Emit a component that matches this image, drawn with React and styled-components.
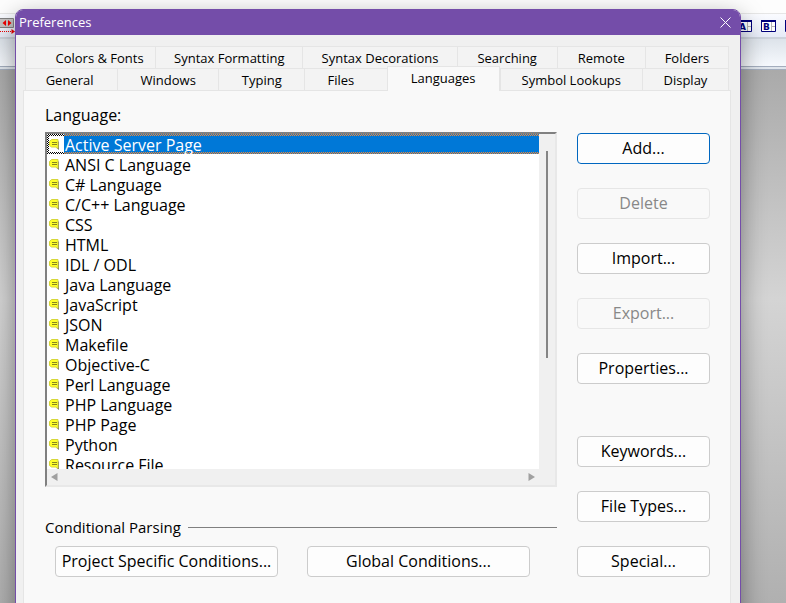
import React from "react";
import { useState } from "react";
import styled, { createGlobalStyle } from "styled-components";

const topTabs = [
  { name: "Colors & Fonts", size: 130, left: 18 },
  { name: "Syntax Formatting", size: 147 },
  { name: "Syntax Decorations", size: 154 },
  { name: "Searching", size: 100 },
  { name: "Remote", size: 88 },
  { name: "Folders", size: 84 }
];

const bottomTabs = [
  { name: "General", size: 92, right: 4 },
  { name: "Windows", size: 101 },
  { name: "Typing", size: 86 },
  { name: "Files", size: 82, right: 10 },
  { name: "Languages", size: 113 },
  { name: "Symbol Lookups", size: 142 },
  { name: "Display", size: 87 }
];

const languages = [
  "Active Server Page",
  "ANSI C Language",
  "C# Language",
  "C/C++ Language",
  "CSS",
  "HTML",
  "IDL / ODL",
  "Java Language",
  "JavaScript",
  "JSON",
  "Makefile",
  "Objective-C",
  "Perl Language",
  "PHP Language",
  "PHP Page",
  "Python",
  "Resource File"
];

const NoteIcon = () => (
  <svg width="11" height="11" viewBox="0 0 11 11" aria-hidden="true">
    <path d="M9 2.500h1V11L7.500 9H9z" fill="#6e6e6e" />
    <path d="M2.500 .5H9v9L7 8H2.500L.5 6.500v-4z" fill="#ffff28" stroke="#d6d63c" />
    <path d="M3 3.500h5M3 5.500h5" stroke="#85851e" fill="none" />
  </svg>
);

const CloseIcon = () => (
  <svg width="11" height="11" viewBox="0 0 11 11" aria-hidden="true">
    <path d="M.5 .5l10 10M10.500 .5l-10 10" stroke="#fff" fill="none" />
  </svg>
);

const WidthIcon = () => (
  <svg width="15" height="18" viewBox="0 0 15 18" aria-hidden="true">
    <path d="M0 .5h13.500v9H0" fill="#c6c3c3" stroke="#828282" />
    <path d="M6 2v6L2.500 5zM8 2v6l3.500-3z" fill="#f00000" />
    <path d="M0 13.500h12" stroke="#f00000" strokeDasharray="1 1" />
    <path d="M11.500 11l3.500 2.500-3.500 2.500z" fill="#f00000" />
  </svg>
);

const BookmarkIcon = ({ letter }) => (
  <svg width="15" height="12" viewBox="0 0 15 12" aria-hidden="true">
    <path d="M.5 1h14v10.500H.5z" fill="#fff" stroke="#00007b" />
    <path d="M0 1h15" stroke="#00007b" strokeWidth="2" />
    <path d="M10.500 2v9M11 6.500h3" stroke="#b4b4b4" />
    <text x="2" y="10" fontSize="9" fontWeight="700" fontFamily="DejaVu Sans, sans-serif" fill="#00007b">
      {letter}
    </text>
  </svg>
);

function TabRow({ tabs, current, onSelect }) {
  return (
    <TabList role="tablist" $columns={tabs.map((tab) => `${tab.size}fr`).join(" ")}>
      {tabs.map((tab) => (
        <Tab
          key={tab.name}
          role="tab"
          aria-selected={current === tab.name}
          $left={tab.left}
          $right={tab.right}
          onClick={() => onSelect(tab.name)}
        >
          {tab.name}
        </Tab>
      ))}
    </TabList>
  );
}

function App() {
  const [tab, setTab] = useState("Languages");
  const [language, setLanguage] = useState("Active Server Page");

  return (
    <Desktop>
      <GlobalStyle />
      <MenuStrip />
      <ToolStrip>
        <WidthIcon />
        <ToolGroup>
          <BookmarkIcon letter="A" />
          <BookmarkIcon letter="B" />
          <BookmarkIcon />
        </ToolGroup>
      </ToolStrip>
      <SubStrip />
      <Workspace />

      <Dialog role="dialog" aria-labelledby="dialog-title">
        <TitleBar>
          <Title id="dialog-title">Preferences</Title>
          <CloseButton aria-label="Close">
            <CloseIcon />
          </CloseButton>
        </TitleBar>
        <DialogBody>
          <Tabs>
            <TabRow tabs={topTabs} current={tab} onSelect={setTab} />
            <TabRow tabs={bottomTabs} current={tab} onSelect={setTab} />
          </Tabs>
          <Panel role="tabpanel">
            <ListLabel id="language-label">Language:</ListLabel>
            <Columns>
              <div>
                <ListBox>
                  <List role="listbox" aria-labelledby="language-label" tabIndex={0}>
                    {languages.map((name) => (
                      <Item
                        key={name}
                        role="option"
                        aria-selected={language === name}
                        onClick={() => setLanguage(name)}
                      >
                        <IconCell>
                          <NoteIcon />
                        </IconCell>
                        <ItemName>{name}</ItemName>
                      </Item>
                    ))}
                  </List>
                  <VerticalBar>
                    <Thumb />
                  </VerticalBar>
                  <HorizontalBar>
                    <svg width="7" height="8" viewBox="0 0 7 8" aria-hidden="true">
                      <path d="M6.500 0v8L0 4z" fill="#a0a0a0" />
                    </svg>
                    <svg width="7" height="8" viewBox="0 0 7 8" aria-hidden="true">
                      <path d="M.5 0v8L7 4z" fill="#a0a0a0" />
                    </svg>
                  </HorizontalBar>
                </ListBox>
                <GroupTitle>
                  <span id="parsing-label">Conditional Parsing</span>
                  <Rule />
                </GroupTitle>
                <GroupButtons role="group" aria-labelledby="parsing-label">
                  <Button>Project Specific Conditions...</Button>
                  <Button>Global Conditions...</Button>
                </GroupButtons>
              </div>
              <Actions>
                <ActionGroup>
                  <Button $primary>Add...</Button>
                  <Button disabled>Delete</Button>
                  <Button>Import...</Button>
                  <Button disabled>Export...</Button>
                  <Button>Properties...</Button>
                </ActionGroup>
                <ActionGroup>
                  <Button>Keywords...</Button>
                  <Button>File Types...</Button>
                  <Button>Special...</Button>
                </ActionGroup>
              </Actions>
            </Columns>
          </Panel>
        </DialogBody>
      </Dialog>
    </Desktop>
  );
}
export default App;

const GlobalStyle = createGlobalStyle`
  * {
    box-sizing: border-box;
  }

  body {
    margin: 0;
    font-family: "Open Sans", "Noto Sans", sans-serif;
    font-size: 15px;
    color: #000;
  }

  button {
    font-family: inherit;
    color: inherit;
    white-space: nowrap;
  }
`;

const Desktop = styled.div`
  position: relative;
  display: flex;
  flex-direction: column;
  height: 100vh;
  overflow: hidden;
`;

const MenuStrip = styled.div`
  height: 13px;
  background-color: #fdfdfd;
`;

const ToolStrip = styled.div`
  display: flex;
  justify-content: space-between;
  height: 26px;
  padding-top: 4px;
  border-top: 1px solid #e6e6e6;
  border-bottom: 2px solid #cdd3dc;
  background: linear-gradient(#fafbff, #e6ebf7);
`;

const ToolGroup = styled.div`
  display: flex;
  gap: 9px;
  margin-right: -14px;
  padding-top: 2px;
`;

const SubStrip = styled.div`
  height: 31px;
  border-bottom: 4px double #a3adbd;
  background: linear-gradient(to bottom, #dde3ea, #f6f9fd);
`;

const Workspace = styled.div`
  flex: 1;
  background: linear-gradient(#aaaaaa, #d4d4d4 43%, #b0b0b0);
`;

const Dialog = styled.section`
  position: absolute;
  top: 9px;
  right: 45px;
  bottom: -20px;
  left: 15px;
  display: flex;
  flex-direction: column;
  border: 1px solid #744da9;
  border-radius: 8px;
  background-color: #f0f0f0;
  box-shadow: 0 8px 24px rgba(0, 0, 0, 0.4);
  overflow: hidden;
`;

const TitleBar = styled.header`
  display: flex;
  align-items: center;
  justify-content: space-between;
  height: 25px;
  padding: 0 4px 0 3px;
  background-color: #744da9;
  color: #fff;
`;

const Title = styled.h1`
  margin: 0;
  font-size: 13px;
  font-weight: 400;
  line-height: 23px;
`;

const CloseButton = styled.button`
  display: flex;
  align-items: center;
  justify-content: center;
  width: 22px;
  height: 22px;
  padding: 0;
  border: none;
  background: none;
  cursor: pointer;
`;

const DialogBody = styled.div`
  display: flex;
  flex-direction: column;
  flex: 1;
  padding: 11px 9px 0 7px;
`;

const Tabs = styled.div`
  padding: 0 2px;
`;

const TabList = styled.div`
  display: grid;
  grid-template-columns: ${({ $columns }) => $columns};
  height: 22px;
`;

const Tab = styled.button`
  min-width: 0;
  height: 22px;
  padding: 0 ${({ $right }) => $right || 0}px 0 ${({ $left }) => $left || 0}px;
  border: 1px solid #e5e5e5;
  border-width: 1px 0 0 1px;
  background-color: #f3f3f3;
  font-size: 13px;
  line-height: 20px;

  &:last-child {
    border-right-width: 1px;
  }

  &[aria-selected="true"] {
    height: 25px;
    margin-top: -2px;
    padding-bottom: 2px;
    border-right-width: 1px;
    background-color: #f9f9f9;
    z-index: 1;
  }
`;

const Panel = styled.div`
  flex: 1;
  padding: 13px 20px 0 21px;
  border: 1px solid #e5e5e5;
  background-color: #f9f9f9;
`;

const ListLabel = styled.div`
  height: 28px;
  font-size: 16px;
  line-height: 22px;
`;

const Columns = styled.div`
  display: grid;
  grid-template-columns: 1fr 133px;
  gap: 20px;
`;

const ListBox = styled.div`
  display: grid;
  grid-template-columns: 1fr 16px;
  grid-template-rows: 335px 16px;
  border: 2px solid;
  border-color: #808080 #e8e8e8 #e8e8e8 #808080;
  background-color: #f0f0f0;
`;

const List = styled.ul`
  margin: 0;
  padding: 0;
  background-color: #fff;
  font-size: 16px;
  list-style: none;
  overflow: hidden;
  outline: none;
`;

const Item = styled.li`
  display: flex;
  height: 20px;
  cursor: default;
`;

const IconCell = styled.span`
  width: 17px;
  padding: 5px 0 0 2px;
  line-height: 0;

  [aria-selected="true"] > & {
    --check: repeating-conic-gradient(#000 0 25%, #fff 0 50%);
    background:
      var(--check) 0 0 / 2px 2px repeat-x,
      var(--check) 0 100% / 2px 2px repeat-x,
      var(--check) 0 0 / 2px 2px repeat-y;
  }
`;

const ItemName = styled.span`
  flex: 1;
  padding-left: 1px;
  line-height: 22px;

  [aria-selected="true"] > & {
    --check: repeating-conic-gradient(#ff8728 0 25%, #0078d7 0 50%);
    background:
      var(--check) 0 0 / 2px 2px repeat-x,
      var(--check) 0 100% / 2px 2px repeat-x,
      #0078d7;
    color: #fff;
  }
`;

const VerticalBar = styled.div`
  grid-row: 1 / 3;
  grid-column: 2;
  padding: 17px 7px 0;
`;

const Thumb = styled.div`
  width: 2px;
  height: 207px;
  background-color: #858585;
`;

const HorizontalBar = styled.div`
  display: flex;
  align-items: center;
  justify-content: space-between;
  padding: 0 4px;
`;

const GroupTitle = styled.div`
  display: flex;
  align-items: center;
  gap: 7px;
  height: 22px;
  margin-top: 29px;
`;

const Rule = styled.div`
  flex: 1;
  height: 1px;
  background-color: #808080;
`;

const GroupButtons = styled.div`
  display: grid;
  grid-template-columns: 1fr 1fr;
  gap: 29px;
  padding: 8px 27px 0 10px;
`;

const Button = styled.button`
  width: 100%;
  height: 31px;
  padding: 0 0 2px;
  border: 1px solid ${({ $primary }) => ($primary ? "#0067c0" : "#cccccc")};
  border-radius: 4px;
  background-color: #fdfdfd;
  font-size: 16px;
  line-height: 20px;

  &:disabled {
    border-color: #e6e6e6;
    background-color: #f9f9f9;
    color: #888;
  }
`;

const Actions = styled.div`
  display: flex;
  flex-direction: column;
  gap: 52px;
  padding-top: 1px;
`;

const ActionGroup = styled.div`
  display: flex;
  flex-direction: column;
  gap: 24px;
`;
